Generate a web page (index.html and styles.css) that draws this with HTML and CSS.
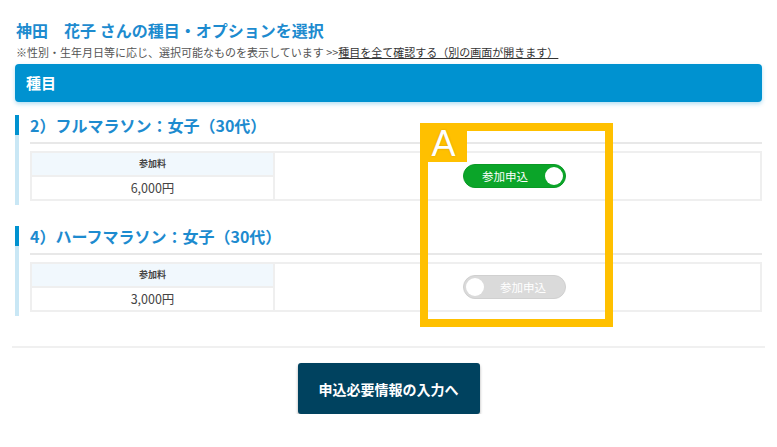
FILE: index.html
```html
<!DOCTYPE html>
<html lang="ja">
<head>
    <meta charset="UTF-8">
    <meta name="viewport" content="width=device-width, initial-scale=1.0">
    <title>種目・オプションを選択</title>
    <link rel="stylesheet" href="styles.css">
</head>
<body>
    <div class="page">
        <h1 class="title">神田　花子 さんの種目・オプションを選択</h1>
        <p class="note">※性別・生年月日等に応じ、選択可能なものを表示しています &gt;&gt;<a href="#">種目を全て確認する（別の画面が開きます）</a></p>
        <div class="bar">種目</div>

        <section class="event">
            <h2>2）フルマラソン：女子（30代）</h2>
            <div class="fee-table">
                <div class="fee-cell">
                    <div class="fee-head">参加料</div>
                    <div class="fee-val">6,000円</div>
                </div>
                <div class="toggle-cell">
                    <span class="toggle on"><span class="toggle-text">参加申込</span><span class="knob"></span></span>
                </div>
            </div>
        </section>

        <section class="event">
            <h2>4）ハーフマラソン：女子（30代）</h2>
            <div class="fee-table">
                <div class="fee-cell">
                    <div class="fee-head">参加料</div>
                    <div class="fee-val">3,000円</div>
                </div>
                <div class="toggle-cell">
                    <span class="toggle off"><span class="knob"></span><span class="toggle-text">参加申込</span></span>
                </div>
            </div>
        </section>

        <hr class="divider">
        <div class="actions">
            <button type="button">申込必要情報の入力へ</button>
        </div>
    </div>

    <!-- 注釈の枠 -->
    <div class="marker"><span class="marker-label">A</span></div>
</body>
</html>
```

FILE: styles.css
```css
body {
    font-family: "Noto Sans CJK JP", "Liberation Sans", sans-serif;
    background-color: #fff;
    color: #333;
    margin: 0;
    padding: 0;
}

.page {
    padding: 20px 15px 0;
}

.title {
    font-size: 16px;
    line-height: 20px;
    font-weight: bold;
    color: #1d8bcf;
    margin: 0 0 0 1px;
}

.note {
    font-size: 11px;
    line-height: 14px;
    color: #555;
    margin: 5px 0 0 1px;
}

.note a {
    color: #333;
    text-decoration: underline;
}

.bar {
    margin-top: 5px;
    height: 38px;
    line-height: 38px;
    padding-left: 11px;
    background-color: #0092d0;
    color: #fff;
    font-size: 15px;
    font-weight: bold;
    border-radius: 4px;
    box-shadow: 0 2px 4px rgba(0, 146, 208, 0.3);
}

.event {
    margin-top: 13px;
    padding: 0 0 4px 15px;
    background:
        linear-gradient(#0092d0, #0092d0) 0 0 / 4px 20px no-repeat,
        linear-gradient(#c9e7f5, #c9e7f5) 0 0 / 4px 100% no-repeat;
}

.event + .event {
    margin-top: 21px;
}

.event h2 {
    margin: 0;
    font-size: 16px;
    line-height: 20px;
    font-weight: bold;
    color: #1d8bcf;
    padding-bottom: 7px;
    border-bottom: 2px solid #e8e8e8;
}

.fee-table {
    margin-top: 7px;
    display: flex;
    border: 2px solid #efefef;
}

.fee-cell {
    width: 241px;
    border-right: 2px solid #efefef;
}

.fee-head {
    height: 22px;
    line-height: 22px;
    background-color: #f1f8fd;
    border-bottom: 2px solid #efefef;
    text-align: center;
    font-size: 9px;
    font-weight: bold;
    color: #444;
}

.fee-val {
    height: 22px;
    line-height: 22px;
    text-align: center;
    font-size: 12.5px;
    color: #444;
}

.toggle-cell {
    flex: 1;
    display: flex;
    align-items: center;
    justify-content: center;
    padding-right: 7px;
}

.toggle {
    box-sizing: border-box;
    width: 103px;
    height: 24px;
    border-radius: 12px;
    display: flex;
    align-items: center;
    padding: 0 2px;
    font-size: 11.5px;
    color: #fff;
}

.toggle.on {
    background-color: #0ba529;
    border: 1px solid #0a9a25;
}

.toggle.off {
    background-color: #dadada;
    border: 1px solid #d0d0d0;
}

.toggle-text {
    flex: 1;
    text-align: center;
}

.knob {
    width: 18px;
    height: 18px;
    border-radius: 50%;
    background-color: #fff;
}

.divider {
    margin: 30px -3px 0;
    border: none;
    border-top: 2px solid #f0f0f0;
}

.actions {
    display: flex;
    justify-content: center;
    margin-top: 15px;
}

button {
    width: 182px;
    height: 51px;
    background-color: #00425f;
    color: #fff;
    font-family: inherit;
    font-size: 14px;
    font-weight: bold;
    border: none;
    border-radius: 3px;
    box-shadow: 0 2px 3px rgba(0, 0, 0, 0.35);
    cursor: pointer;
}

.marker {
    position: absolute;
    left: 420px;
    top: 123px;
    width: 193px;
    height: 204px;
    box-sizing: border-box;
    border: 8px solid #ffc000;
}

.marker-label {
    position: absolute;
    left: -8px;
    top: -8px;
    width: 47px;
    height: 39px;
    line-height: 42px;
    background-color: #ffc000;
    color: #fff;
    font-family: "Liberation Sans", sans-serif;
    font-size: 36px;
    text-align: center;
    text-shadow: 0 0 2px rgba(150, 100, 0, 0.4);
}
```
